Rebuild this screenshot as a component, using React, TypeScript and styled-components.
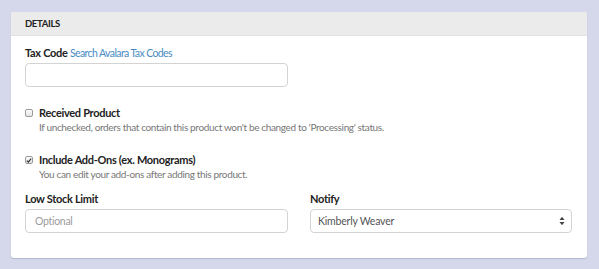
import styled, { createGlobalStyle } from 'styled-components';

const GlobalStyle = createGlobalStyle`
  html, body {
    margin: 0;
    padding: 0;
    background: #d5d8ea;
    font-family: 'Lato', 'Open Sans', sans-serif;
    color: #222;
  }
`;

function App() {
  return (
    <Page>
      <GlobalStyle />
      <Card>
        <Header>Details</Header>
        <Body>
          <Field>
            <Label>
              Tax Code <Link>Search Avalara Tax Codes</Link>
            </Label>
            <Input />
          </Field>
          <Options>
            <Check>
              <Box />
              <div>
                <CheckTitle>Received Product</CheckTitle>
                <Help>If unchecked, orders that contain this product won't be changed to 'Processing' status.</Help>
              </div>
            </Check>
            <Check>
              <Box checked>
                <svg width="7" height="7" viewBox="0 0 7 7">
                  <path d="M1 3.6 L2.8 5.3 L6 1.2" stroke="#333" strokeWidth="1.4" fill="none" />
                </svg>
              </Box>
              <div>
                <CheckTitle>Include Add-Ons (ex. Monograms)</CheckTitle>
                <Help>You can edit your add-ons after adding this product.</Help>
              </div>
            </Check>
          </Options>
          <Row>
            <Field>
              <Label>Low Stock Limit</Label>
              <Input placeholder="Optional" />
            </Field>
            <Field>
              <Label>Notify</Label>
              <Select>
                Kimberly Weaver
                <svg width="6" height="10" viewBox="0 0 6 10">
                  <path d="M0.5 4 L3 0.8 L5.5 4 Z M0.5 6 L3 9.2 L5.5 6 Z" fill="#444" />
                </svg>
              </Select>
            </Field>
          </Row>
        </Body>
      </Card>
    </Page>
  );
}

const Page = styled.div`
  padding: 12px 12px 11px 11px;
`;

const Card = styled.div`
  background: #fff;
  border-radius: 3px;
  box-shadow: 0 1px 1px rgba(80, 85, 120, 0.25);
  overflow: hidden;
`;

const Header = styled.div`
  background: #ebebeb;
  height: 23px;
  line-height: 23px;
  padding: 0 14px;
  font-size: 9.5px;
  font-weight: 700;
  letter-spacing: -0.35px;
  text-transform: uppercase;
  color: #222;
  border-bottom: 1px solid #e2e2e2;
`;

const Body = styled.div`
  padding: 10px 15px 25px 14px;
`;

const Field = styled.div`
  display: flex;
  flex-direction: column;
  gap: 3px;
`;

const Label = styled.div`
  font-size: 11px;
  font-weight: 700;
  letter-spacing: -0.3px;
  line-height: 14px;
  color: #222;
`;

const Link = styled.span`
  font-weight: 400;
  font-size: 10.5px;
  letter-spacing: -0.6px;
  color: #4a8cc2;
`;

const Input = styled.input`
  box-sizing: border-box;
  width: 263px;
  height: 24px;
  border: 1px solid #d3d3d3;
  border-radius: 4px;
  padding: 0 9px;
  font-family: inherit;
  font-size: 10.5px;
  letter-spacing: -0.3px;
  color: #555;
  outline: none;
  &::placeholder {
    color: #9c9c9c;
  }
`;

const Options = styled.div`
  display: flex;
  flex-direction: column;
  gap: 19px;
  margin: 19px 0 11px;
`;

const Check = styled.div`
  display: flex;
  align-items: flex-start;
  gap: 6px;
`;

const Box = styled.span<{ checked?: boolean }>`
  box-sizing: border-box;
  width: 8px;
  height: 8px;
  margin-top: 3px;
  border: 1px solid #9a9a9a;
  border-radius: 2px;
  background: linear-gradient(#fdfdfd, #e4e4e4);
  display: flex;
  align-items: center;
  justify-content: center;
`;

const CheckTitle = styled.div`
  font-size: 11px;
  font-weight: 700;
  letter-spacing: -0.3px;
  line-height: 14px;
`;

const Help = styled.div`
  font-size: 10px;
  letter-spacing: -0.35px;
  line-height: 14px;
  color: #777;
`;

const Row = styled.div`
  display: grid;
  grid-template-columns: 263px 262px;
  column-gap: 22px;
`;

const Select = styled.div`
  box-sizing: border-box;
  height: 24px;
  border: 1px solid #d3d3d3;
  border-radius: 4px;
  padding: 0 6px 0 7px;
  display: flex;
  align-items: center;
  justify-content: space-between;
  font-size: 10.5px;
  letter-spacing: -0.2px;
  color: #555;
`;

export default App;
